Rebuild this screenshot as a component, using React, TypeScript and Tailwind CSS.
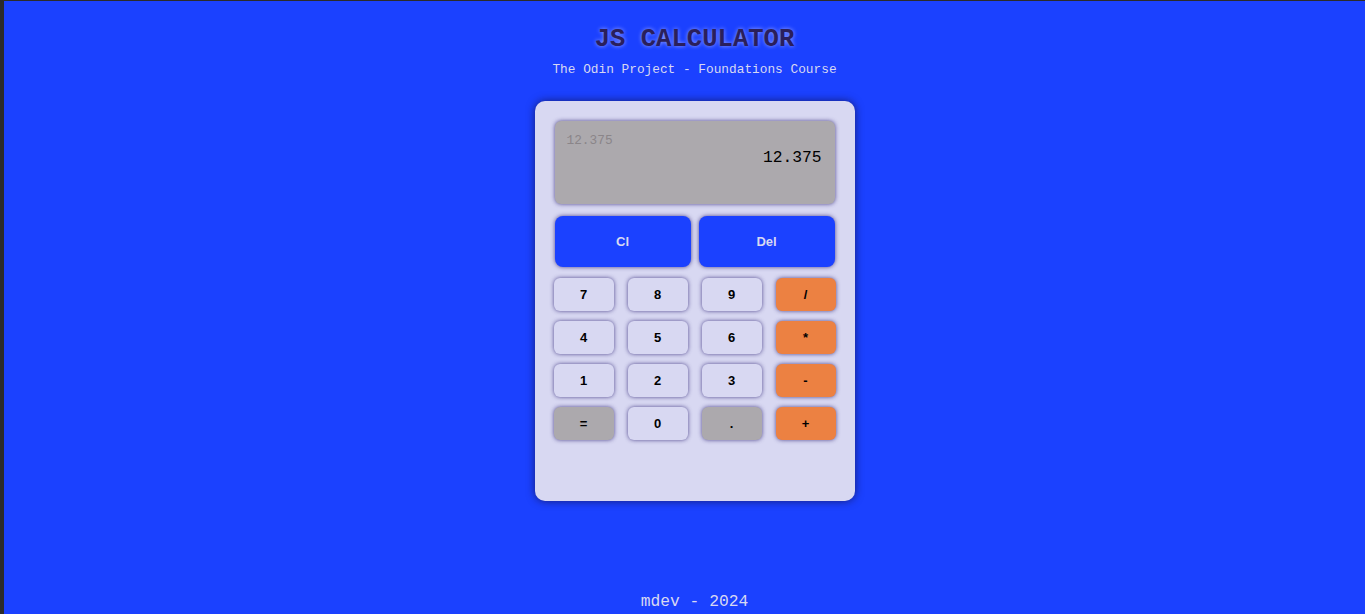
import React from "react";

type Btn = { label: string; kind: "num" | "op" | "gray" };

const rows: Btn[][] = [
  [
    { label: "7", kind: "num" },
    { label: "8", kind: "num" },
    { label: "9", kind: "num" },
    { label: "/", kind: "op" },
  ],
  [
    { label: "4", kind: "num" },
    { label: "5", kind: "num" },
    { label: "6", kind: "num" },
    { label: "*", kind: "op" },
  ],
  [
    { label: "1", kind: "num" },
    { label: "2", kind: "num" },
    { label: "3", kind: "num" },
    { label: "-", kind: "op" },
  ],
  [
    { label: "=", kind: "gray" },
    { label: "0", kind: "num" },
    { label: ".", kind: "gray" },
    { label: "+", kind: "op" },
  ],
];

const bgFor: Record<Btn["kind"], string> = {
  op: "bg-[#ec8142]",
  gray: "bg-[#aca9ad]",
  num: "bg-[#d8d8f2]",
};

function KeyButton({ b }: { b: Btn }) {
  return (
    <button
      className={`${bgFor[b.kind]} h-[33px] w-[60px] rounded-[6px] font-['Liberation_Sans',Arial,sans-serif] text-[13px] font-bold text-black shadow-[0_0_4px_rgba(55,45,125,0.85)] flex items-center justify-center`}
    >
      {b.label}
    </button>
  );
}

export default function App() {
  return (
    <div className="h-[614px] w-full overflow-hidden bg-[#1b41ff] border-l-4 border-t border-[#2b2b2b] pl-[20px] flex flex-col items-center font-['Liberation_Mono','DejaVu_Sans_Mono',monospace]">
      <h1 className="mt-[23px] text-[25.6px] leading-[32px] font-bold text-[#2a1f5c] [text-shadow:0_0_4px_rgba(160,170,255,0.95)]">
        JS CALCULATOR
      </h1>
      <p className="mt-[6px] text-[12.8px] leading-[16px] text-[#d8d8f2]">
        The Odin Project - Foundations Course
      </p>
      <div className="mt-[23px] w-[320px] h-[400px] rounded-[10px] bg-[#d8d8f2] p-[20px] shadow-[0_0_8px_rgba(20,20,80,0.8)] flex flex-col">
        <div className="h-[83px] rounded-[6px] bg-[#aca9ad] shadow-[0_0_4px_rgba(55,45,125,0.85)] px-[12px] pt-[12px] flex flex-col">
          <div className="text-[12.8px] leading-[16px] text-[#8a8589]">12.375</div>
          <div className="-mt-[1px] text-right pr-[1px] text-[16.3px] leading-[20px] text-black">12.375</div>
        </div>
        <div className="mt-[12px] flex gap-[8px]">
          {["Cl", "Del"].map((t) => (
            <button
              key={t}
              className="h-[51px] flex-1 rounded-[8px] bg-[#1b41ff] font-['Liberation_Sans',Arial,sans-serif] text-[13px] font-bold text-[#d8d8f2] shadow-[0_0_4px_rgba(55,45,125,0.85)]"
            >
              {t}
            </button>
          ))}
        </div>
        <div className="mt-[11px] -ml-[1px] grid grid-cols-[60px_60px_60px_60px] gap-x-[14px] gap-y-[10px]">
          {rows.flat().map((b) => (
            <KeyButton key={b.label} b={b} />
          ))}
        </div>
      </div>
      <footer className="mt-auto mb-[2px] text-[16.3px] leading-[20px] text-[#d8d8f2]">mdev - 2024</footer>
    </div>
  );
}
